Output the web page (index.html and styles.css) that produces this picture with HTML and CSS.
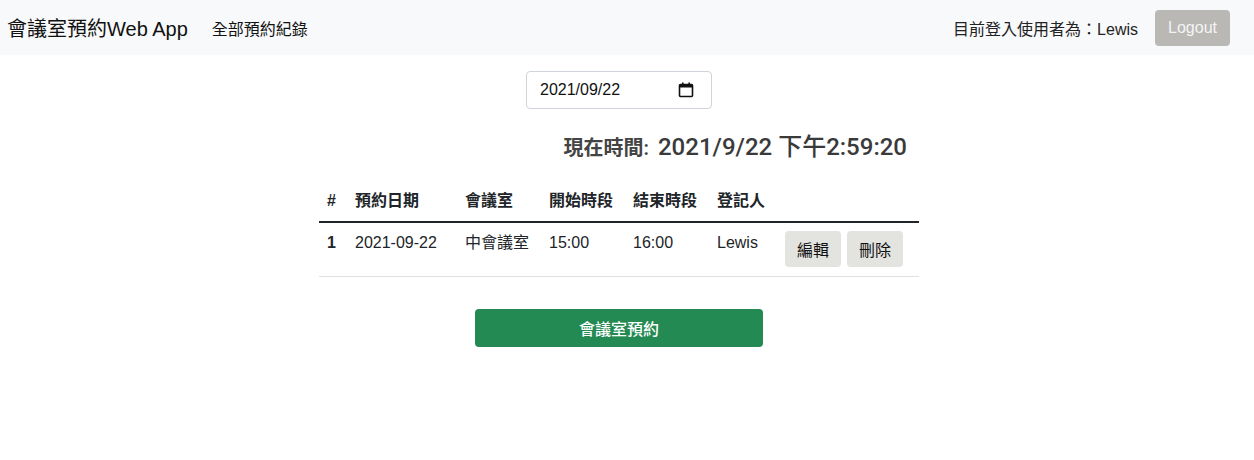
FILE: index.html
```html
<!DOCTYPE html>
<html lang="zh-Hant">
<head>
<meta charset="utf-8">
<title>會議室預約Web App</title>
<link rel="stylesheet" href="styles.css">
</head>
<body>
<nav class="navbar">
  <div class="nav-left">
    <span class="brand">會議室預約Web App</span>
    <a class="nav-link" href="#">全部預約紀錄</a>
  </div>
  <div class="nav-right">
    <span class="user">目前登入使用者為：Lewis</span>
    <button class="btn-logout">Logout</button>
  </div>
</nav>
<main class="main">
  <div class="date-input">
    <span class="date-text">2021/09/22</span>
    <svg class="cal-icon" width="16" height="16" viewBox="0 0 16 16" aria-hidden="true">
      <rect x="1.5" y="2.5" width="13" height="12" rx="1" fill="none" stroke="#111" stroke-width="1.6"/>
      <rect x="1.5" y="2.5" width="13" height="3" fill="#111"/>
      <rect x="4" y="0.5" width="1.6" height="3" fill="#111"/>
      <rect x="10.4" y="0.5" width="1.6" height="3" fill="#111"/>
    </svg>
  </div>
  <div class="time-row">
    <span class="time-label">現在時間:</span>
    <span class="time-value">2021/9/22 下午2:59:20</span>
  </div>
  <table class="table">
    <thead>
      <tr>
        <th class="c-no">#</th>
        <th class="c-date">預約日期</th>
        <th class="c-room">會議室</th>
        <th class="c-start">開始時段</th>
        <th class="c-end">結束時段</th>
        <th class="c-user">登記人</th>
        <th class="c-act"></th>
      </tr>
    </thead>
    <tbody>
      <tr>
        <th>1</th>
        <td>2021-09-22</td>
        <td>中會議室</td>
        <td>15:00</td>
        <td>16:00</td>
        <td>Lewis</td>
        <td><div class="actions"><button class="btn-gray">編輯</button><button class="btn-gray">刪除</button></div></td>
      </tr>
    </tbody>
  </table>
  <button class="btn-success">會議室預約</button>
</main>
</body>
</html>
```

FILE: styles.css
```css
* { box-sizing: border-box; }
body {
  margin: 0;
  font-family: "Liberation Sans", "Noto Sans CJK TC", sans-serif;
  font-size: 16px;
  color: #212529;
  background: #fff;
}
.navbar {
  height: 55px;
  background: #f8f9fa;
  display: flex;
  align-items: center;
  justify-content: space-between;
  padding: 0 24px 0 7px;
}
.nav-left { display: flex; align-items: center; }
.brand { font-size: 20px; color: #111; margin-right: 24px; }
.nav-link { font-size: 16px; color: #111; text-decoration: none; }
.nav-right { display: flex; align-items: center; }
.user { color: #222; margin-right: 17px; }
.btn-logout {
  font-family: inherit;
  font-size: 16px;
  height: 36px;
  width: 75px;
  border: none;
  border-radius: 4px;
  background: #b9b8b5;
  color: #f4f4f4;
  padding: 0;
}
.main {
  display: flex;
  flex-direction: column;
  align-items: center;
  padding-right: 16px;
}
.date-input {
  margin-top: 16px;
  width: 186px;
  height: 38px;
  border: 1px solid #ced4da;
  border-radius: 4px;
  display: flex;
  align-items: center;
  justify-content: space-between;
  padding: 0 17px 0 13px;
}
.date-text { font-size: 16px; color: #111; }
.cal-icon { display: block; }
.time-row {
  width: 600px;
  display: flex;
  justify-content: flex-end;
  align-items: baseline;
  padding-right: 12px;
  margin-top: 18px;
  height: 54px;
}
.time-label { font-size: 20px; color: #444; font-weight: 600; margin-right: 9px; font-family: "Roboto", "Noto Sans CJK TC", sans-serif; }
.time-value { font-size: 24px; color: #3a3a3a; font-weight: 500; font-family: "Roboto", "Noto Sans CJK TC", sans-serif; }
.table {
  width: 600px;
  border-collapse: collapse;
  table-layout: fixed;
}
.table th, .table td {
  padding: 8px;
  text-align: left;
  vertical-align: top;
  line-height: 24px;
}
.table thead th {
  font-weight: bold;
  border-bottom: 2px solid #212529;
}
.table tbody th, .table tbody td {
  border-bottom: 1px solid #dee2e6;
  height: 54px;
}
.c-no { width: 28px; }
.c-date { width: 110px; }
.c-room { width: 84px; }
.c-start { width: 84px; }
.c-end { width: 84px; }
.c-user { width: 68px; }
.c-act { width: 142px; }
.actions { display: flex; gap: 6px; }
.btn-gray {
  font-family: inherit;
  font-size: 16px;
  width: 56px;
  height: 36px;
  border: none;
  border-radius: 4px;
  background: #e3e3e0;
  color: #111;
  padding: 0;
}
.btn-success {
  margin-top: 32px;
  width: 288px;
  height: 38px;
  border: none;
  border-radius: 4px;
  background: #238a53;
  color: #fff;
  font-family: inherit;
  font-size: 16px;
  font-weight: 500;
}
```
